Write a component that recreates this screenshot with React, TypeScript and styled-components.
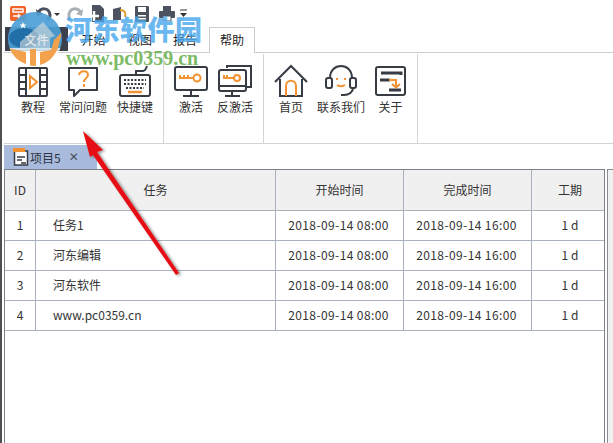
import React from "react";
import styled, { createGlobalStyle } from "styled-components";

const Global = createGlobalStyle`
  html, body { margin: 0; padding: 0; background: #fff; }
  body { width: 613px; height: 443px; overflow: hidden; font-family: "Liberation Sans", "Noto Sans CJK SC", sans-serif; }
`;
const ink = "#363b44";
const org = "#f39230";

const Page = styled.div`position: relative; width: 613px; height: 443px; overflow: hidden; background: #fff; color: #333; font-size: 12px; font-family: "Noto Sans CJK SC", sans-serif; border-left: 2px solid #4f4f4f; box-sizing: border-box;`;
const QuickBar = styled.div`height: 27px; display: flex; align-items: center; padding-left: 8px;`;
const QuickIcon = styled.svg<{ $ml?: number }>`display: block; margin-left: ${(p) => p.$ml ?? 0}px; flex: none;`;
const TabRow = styled.div`height: 25px; display: flex; padding-left: 3px;`;
const FileTab = styled.div`width: 63px; height: 24px; background: #3b404c; display: flex; align-items: center; justify-content: center;`;
const FileLabel = styled.span`position: relative; z-index: 3; color: #eeeeee; font-size: 12px;`;
const Tab = styled.div<{ $active?: boolean; $w: number }>`
  width: ${(p) => p.$w}px; height: ${(p) => (p.$active ? 26 : 24)}px; display: flex; align-items: center; justify-content: center; color: #222; box-sizing: border-box; font-size: 12px; flex: none; padding-bottom: ${(p) => (p.$active ? 2 : 0)}px;
  ${(p) => p.$active ? "border: 1px solid #ccc; border-bottom: none; background: #fff; position: relative; z-index: 1;" : ""}
`;
const Ribbon = styled.div`height: 92px; margin-left: 2px; border-top: 1px solid #ccc; border-bottom: 1px solid #d4d4d4; box-sizing: border-box; display: flex;`;
const Group = styled.div<{ $w: number; $pl?: number }>`width: ${(p) => p.$w}px; flex: none; margin-top: 1px; border-right: 1px solid #d4d4d4; box-sizing: border-box; display: flex; padding: 10px 0 0 ${(p) => p.$pl ?? 0}px;`;
const Tool = styled.div<{ $w: number }>`width: ${(p) => p.$w}px; flex: none; display: flex; flex-direction: column; align-items: center; font-size: 12px; color: #333; white-space: nowrap;`;
const ToolIcon = styled.svg`display: block; width: 34px; height: 34px; flex: none;`;
const ToolLabel = styled.div`margin-top: 1px; line-height: 16px; height: 16px;`;
const DocBar = styled.div`height: 25px; margin-left: 2px; display: flex; align-items: flex-end;`;
const DocTab = styled.div`width: 93px; height: 24px; background: #a9bbdd; display: flex; align-items: center; padding-left: 9px; box-sizing: border-box; gap: 1px; font-size: 12px; color: #2d3340;`;
const Close = styled.span`margin-left: 7px; font-size: 12px; color: #4a5160; font-family: "DejaVu Sans", sans-serif;`;
const Work = styled.div`display: flex; margin-left: 2px; height: 274px;`;
const Sheet = styled.div`width: 601px; flex: none; border: 1px solid #7c808a; border-bottom: none; box-sizing: border-box;`;
const SidePane = styled.div`flex: 1; margin-left: 2px; border-left: 1px solid #8a8d94; border-top: 1px solid #8a8d94; background: #f1f1f1;`;
const GridRow = styled.div<{ $head?: boolean }>`
  display: grid; grid-template-columns: 31px 240px 128px 128px 72px; height: ${(p) => (p.$head ? 41 : 30)}px; box-sizing: border-box;
  border-bottom: 1px solid #aab2bd; background: ${(p) => (p.$head ? "#f0f0f0" : "#fff")};
`;
const Cell = styled.div<{ $pad?: boolean; $last?: boolean; $wide?: boolean }>`
  display: flex; align-items: center; justify-content: ${(p) => (p.$pad ? "flex-start" : "center")};
  padding: 0 ${(p) => (p.$wide ? 2 : 0)}px 2px ${(p) => (p.$pad ? 17 : p.$last ? 4 : 0)}px;
  border-right: ${(p) => (p.$last ? "none" : "1px solid #aab2bd")}; box-sizing: border-box; font-size: 12px; color: #333; font-family: "Noto Sans CJK SC", sans-serif;
  letter-spacing: ${(p) => (p.$wide ? 0.4 : 0)}px;
`;
const WaterText = styled.div`position: absolute; z-index: 2; left: 63px; top: 11px; font-size: 27px; font-weight: 900; letter-spacing: 0.5px; color: rgba(73, 167, 236, 0.82); font-family: "Noto Sans CJK SC", sans-serif; line-height: 36px; white-space: nowrap;`;
const WaterUrl = styled.div`position: absolute; z-index: 2; left: 64px; top: 47px; font-size: 20px; font-weight: bold; color: rgba(106, 178, 80, 0.9); font-family: "Liberation Serif", serif; line-height: 22px; white-space: nowrap;`;
const Overlay = styled.svg`position: absolute; z-index: 2; left: -2px; top: 0; pointer-events: none;`;

const S = { fill: "none", stroke: ink, strokeWidth: 2 } as const;
const O = { fill: "none", stroke: org, strokeWidth: 2 } as const;

const icons: Record<string, React.ReactNode> = {
  film: (<g><rect x="3" y="4" width="28" height="28" rx="1" {...S} /><path d="M10 4v28M24 4v28M3 11h7M3 18h7M3 25h7M24 11h7M24 18h7M24 25h7" {...S} /><path d="M14 12l7 6-7 6z" {...O} /></g>),
  faq: (<g><path d="M3 4h28v22H14l-6 6v-6H3z" {...S} strokeLinejoin="round" /><path d="M13 11c1-5 9-5 9 0 0 3-4 3-4 7" {...O} /><path d="M18 20v3" {...O} /></g>),
  kbd: (<g><rect x="2" y="11" width="30" height="21" rx="2" {...S} /><path d="M18 11V7h7c2 0 3-2 4-5" {...S} /><path d="M6 16h22M6 20h22M8 24h18" stroke={ink} strokeWidth="2" strokeDasharray="2 1.500" fill="none" /><path d="M10 28h14" stroke={org} strokeWidth="2.500" /></g>),
  act: (<g><rect x="1" y="3" width="32" height="23" rx="2" {...S} /><path d="M17 26v5M9 32h16" {...S} /><circle cx="23" cy="14" r="3.500" {...O} /><path d="M5 14h14M6 11v3M10 11v3M14 11v3" {...O} /></g>),
  deact: (<g><path d="M9 4V2h24v21h-5" {...S} /><rect x="1" y="6" width="27" height="21" rx="2" {...S} /><path d="M1 22h27M14 27v5M7 32h15" {...S} /><circle cx="19" cy="14" r="3" {...O} /><path d="M5 14h11M6 11v3M9 11v3" {...O} /></g>),
  home: (<g><path d="M1 18L17 2l16 16" {...S} /><path d="M6 15v17h22V15" {...S} /><path d="M12 32V22c0-7 10-7 10 0v10" {...O} /></g>),
  svc: (<g><path d="M6 14C6-2 28-2 28 14" {...S} /><rect x="2" y="14" width="6" height="10" rx="2" {...S} /><rect x="26" y="14" width="6" height="10" rx="2" {...S} /><path d="M29 24c0 4-4 7-9 7h-3" {...S} /><path d="M13 14v2M21 14v2" {...O} /><path d="M13 21c3 2 5 2 8 0" {...O} /></g>),
  about: (<g><rect x="2" y="3" width="29" height="28" rx="2" {...S} /><path d="M7 9h20v2" stroke={ink} strokeWidth="3" fill="none" /><path d="M6 16h10" stroke={ink} strokeWidth="3" /><path d="M15 26h12" stroke={ink} strokeWidth="3" /><path d="M15 16h7v7M18 20l4 3.500 4-3.500" {...O} /></g>),
};

const groups = [
  { w: 160, pl: 3, tools: [["film", "教程", 52], ["faq", "常问问题", 48], ["kbd", "快捷键", 56]] },
  { w: 100, pl: 0, tools: [["act", "激活", 54], ["deact", "反激活", 34]] },
  { w: 154, pl: 0, tools: [["home", "首页", 54], ["svc", "联系我们", 46], ["about", "关于", 53]] },
] as const;

const rows = [
  ["1", "任务1"],
  ["2", "河东编辑"],
  ["3", "河东软件"],
  ["4", "www.pc0359.cn"],
];

export default function App() {
  return (
    <Page>
      <Global />
      <QuickBar>
        <QuickIcon width="16" height="16" viewBox="0 0 16 16"><rect width="16" height="15" rx="2" fill="#f0642a" /><path d="M3 3h10v3H3zM3 10h6M8 8l2 2-2 2" stroke="#fff" strokeWidth="1.400" fill="none" /></QuickIcon>
        <QuickIcon $ml={9} width="25" height="16" viewBox="0 0 25 16"><path d="M3 8c2-7 11-7 12 1 0 2-1 4-3 5" fill="none" stroke="#4c5260" strokeWidth="3" /><path d="M1 3l1 7 6-2z" fill="#4c5260" /><path d="M19 7h6l-3 3z" fill="#333" /></QuickIcon>
        <QuickIcon $ml={7} width="17" height="16" viewBox="0 0 17 16"><path d="M14 8C12 1 4 1 2 8v6" fill="none" stroke="#aab0b5" strokeWidth="3" /><path d="M16 3l-1 7-6-2z" fill="#aab0b5" /></QuickIcon>
        <QuickIcon $ml={5} width="16" height="17" viewBox="0 0 16 17"><path d="M3 0h8l4 4v13H3z" fill="#4c5260" /><path d="M0 11h10M5 6v10" stroke="#fff" strokeWidth="2.500" /></QuickIcon>
        <QuickIcon $ml={8} width="16" height="16" viewBox="0 0 16 16"><path d="M0 3l8-2v13H0z" fill="#4c5260" /><path d="M7 4c5 0 6 3 5 7" stroke="#e0a030" strokeWidth="2" fill="none" /></QuickIcon>
        <QuickIcon $ml={6} width="14" height="16" viewBox="0 0 14 16"><rect width="14" height="16" rx="1" fill="#4c5260" /><rect x="3" y="1" width="8" height="5" fill="#fff" /><rect x="3" y="9" width="8" height="1.500" fill="#fff" /><rect x="3" y="12" width="8" height="1.500" fill="#fff" /></QuickIcon>
        <QuickIcon $ml={10} width="16" height="15" viewBox="0 0 16 15"><rect y="5" width="16" height="7" rx="1" fill="#4c5260" /><rect x="4" y="0" width="8" height="5" fill="#4c5260" /><rect x="4" y="10" width="8" height="5" fill="#fff" stroke="#4c5260" /></QuickIcon>
        <QuickIcon $ml={5} width="7" height="12" viewBox="0 0 7 12"><path d="M0 2h7" stroke="#333" /><path d="M0 5h7L3.500 9z" fill="#333" /></QuickIcon>
      </QuickBar>
      <TabRow>
        <FileTab><FileLabel>文件</FileLabel></FileTab>
        <Tab $w={51}>开始</Tab>
        <Tab $w={42}>视图</Tab>
        <Tab $w={48}>报告</Tab>
        <Tab $w={46} $active>帮助</Tab>
      </TabRow>
      <Ribbon>
        {groups.map((g, i) => (
          <Group key={i} $w={g.w} $pl={g.pl}>
            {g.tools.map(([ic, label, w]) => (
              <Tool key={label} $w={w}>
                <ToolIcon viewBox="0 0 34 34">{icons[ic]}</ToolIcon>
                <ToolLabel>{label}</ToolLabel>
              </Tool>
            ))}
          </Group>
        ))}
      </Ribbon>
      <DocBar>
        <DocTab>
          <svg width="16" height="18" viewBox="0 0 16 18"><rect x="1.500" y="3" width="13" height="14" fill="#fff" stroke={ink} strokeWidth="1.500" /><path d="M4 9h8M4 12h5M8 15h5" stroke={ink} strokeWidth="1.300" /><rect x="0" y="0" width="12" height="4" fill={org} /></svg>
          <span>项目5</span>
          <Close>✕</Close>
        </DocTab>
      </DocBar>
      <Work>
        <Sheet>
          <GridRow $head>
            <Cell>ID</Cell><Cell>任务</Cell><Cell>开始时间</Cell><Cell>完成时间</Cell><Cell $last>工期</Cell>
          </GridRow>
          {rows.map(([id, name]) => (
            <GridRow key={id}>
              <Cell>{id}</Cell>
              <Cell $pad>{name}</Cell>
              <Cell $wide>2018-09-14 08:00</Cell>
              <Cell $wide>2018-09-14 16:00</Cell>
              <Cell $last>1 d</Cell>
            </GridRow>
          ))}
        </Sheet>
        <SidePane />
      </Work>

      <Overlay width="613" height="443" viewBox="0 0 613 443">
        <defs>
          <filter id="sh" x="-30%" y="-30%" width="160%" height="160%"><feDropShadow dx="2" dy="1" stdDeviation="1.800" floodColor="#000" floodOpacity="0.45" /></filter>
          <clipPath id="disc"><circle cx="35" cy="39" r="27" /></clipPath>
        </defs>
        <g clipPath="url(#disc)">
          <rect x="7" y="12" width="56" height="38" fill="#4d9fd6" fillOpacity="0.92" />
          <rect x="7" y="48" width="56" height="19" fill="#fff" fillOpacity="0.75" />
          <ellipse cx="24" cy="38" rx="15" ry="10" fill="#1f6ca6" fillOpacity="0.95" />
          <path d="M20 42l23-20 12 14-5 2v10H20z" fill="#d8dde0" fillOpacity="0.6" />
          <path d="M8 48c4 8 10 14 18 16V52zM30 49h6v18h-6zM40 52v13c8-2 14-8 18-17l4-16-8 8-3 10z" fill="#f2a24c" />
        </g>
        <path d="M23 22l1 2.500 2.500 0-2 1.500 1 2.500-2.500-1.500-2.500 1.500 1-2.500-2-1.500 2.500 0z" fill="#fff" />
        <g filter="url(#sh)">
          <polygon points="83,131 103,150 97,152 179,273 176,275 93,155 90,157" fill="#e60f12" />
        </g>
      </Overlay>
      <WaterText>河东软件园</WaterText>
      <WaterUrl>www.pc0359.cn</WaterUrl>
    </Page>
  );
}
